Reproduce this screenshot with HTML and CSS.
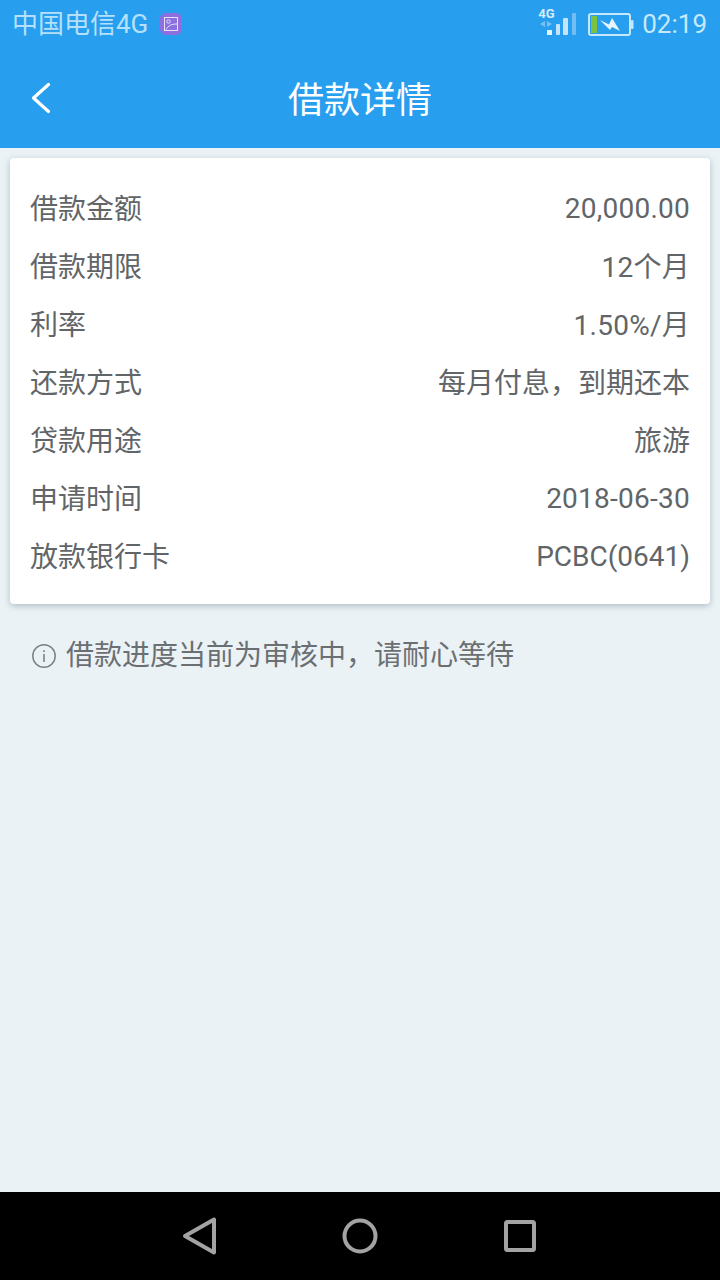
FILE: index.html
```html
<!DOCTYPE html>
<html lang="zh-CN">
<head>
<meta charset="utf-8">
<title>借款详情</title>
<link rel="stylesheet" href="styles.css">
</head>
<body>
<div class="screen">
  <header class="top">
    <div class="status">
      <div class="status-left">
        <span class="carrier">中国电信4G</span>
        <svg class="notif" width="24" height="24" viewBox="0 0 24 24">
          <rect x="1" y="1" width="22" height="22" rx="6" fill="#8e6fe0"/>
          <rect x="5.5" y="5.5" width="13" height="13" fill="none" stroke="#e6e2fa" stroke-width="1"/>
          <circle cx="9.5" cy="9.5" r="1.7" fill="none" stroke="#e6e2fa" stroke-width="1"/>
          <path d="M7 17.5C9.5 13.5 12.5 12 18 12" fill="none" stroke="#e6e2fa" stroke-width="1"/>
        </svg>
      </div>
      <div class="status-right">
        <div class="signal">
          <span class="net">4G</span>
          <svg class="bars" width="38" height="28" viewBox="0 0 38 28">
            <path d="M7 13v6l-5-3zM9 13l5 3-5 3z" fill="#7cc0f2"/>
            <rect x="9" y="22" width="5" height="5" fill="#e4f3fd"/>
            <rect x="18" y="16" width="4" height="11" rx="1" fill="#c5e4fa"/>
            <rect x="25" y="10" width="5" height="17" rx="1" fill="#c5e4fa"/>
            <rect x="34" y="5" width="4" height="22" rx="1" fill="#74bdf3"/>
          </svg>
        </div>
        <svg class="battery" width="46" height="23" viewBox="0 0 46 23">
          <rect x="1" y="1" width="41" height="21" rx="2" fill="none" stroke="#c5e8fb" stroke-width="2"/>
          <rect x="43" y="7" width="2.5" height="9" rx="1" fill="#c5e8fb"/>
          <rect x="3" y="3" width="6" height="17" fill="#7dc142"/>
          <path d="M12 7l9 4.500 3-6.500 8 13-8-4-2 3z" fill="#e6f5fd"/>
        </svg>
        <span class="clock">02:19</span>
      </div>
    </div>
    <div class="titlebar">
      <svg class="back" width="24" height="34" viewBox="0 0 24 34">
        <path d="M19.500 3.500L4.500 17l15 13.500" fill="none" stroke="#fff" stroke-width="3.200" stroke-linecap="round" stroke-linejoin="round"/>
      </svg>
      <h1 class="title">借款详情</h1>
    </div>
  </header>

  <main class="content">
    <section class="card">
      <div class="row"><span>借款金额</span><span class="num latin">20,000.00</span></div>
      <div class="row"><span>借款期限</span><span class="num">12个月</span></div>
      <div class="row"><span>利率</span><span class="num">1.50%/月</span></div>
      <div class="row"><span>还款方式</span><span>每月付息，到期还本</span></div>
      <div class="row"><span>贷款用途</span><span>旅游</span></div>
      <div class="row"><span>申请时间</span><span class="num latin">2018-06-30</span></div>
      <div class="row"><span>放款银行卡</span><span class="latin">PCBC(0641)</span></div>
    </section>
    <p class="notice">
      <svg class="info" width="26" height="26" viewBox="0 0 26 26">
        <circle cx="13" cy="13" r="11.200" fill="none" stroke="#7d8184" stroke-width="1.500"/>
        <rect x="12.200" y="11" width="1.600" height="8" fill="#7d8184"/>
        <rect x="12.200" y="7.200" width="1.600" height="1.800" fill="#7d8184"/>
      </svg>
      <span>借款进度当前为审核中，请耐心等待</span>
    </p>
  </main>

  <nav class="navbar">
    <svg width="36" height="40" viewBox="0 0 36 40">
      <path d="M32 3.500v33L3 20z" fill="none" stroke="#a3a3a3" stroke-width="4" stroke-linejoin="round"/>
    </svg>
    <svg width="36" height="36" viewBox="0 0 36 36">
      <circle cx="18" cy="18" r="15.500" fill="none" stroke="#a3a3a3" stroke-width="4"/>
    </svg>
    <svg width="36" height="32" viewBox="0 0 36 32">
      <rect x="4" y="2" width="28" height="28" rx="1.500" fill="none" stroke="#a3a3a3" stroke-width="4"/>
    </svg>
  </nav>
</div>
</body>
</html>
```
FILE: styles.css
```css
* { box-sizing: border-box; }
html, body { margin: 0; padding: 0; }
body { font-family: "Roboto", "Noto Sans CJK SC", sans-serif; }
.screen { width: 720px; height: 1280px; display: flex; flex-direction: column; background: #eaf2f6; }
.top { height: 148px; background: #279eee; flex: none; }
.status { height: 48px; display: flex; justify-content: space-between; align-items: center; padding: 0 13px 0 12px; }
.status-left { display: flex; align-items: center; gap: 11px; }
.carrier { font-size: 26px; color: #b5e0fb; line-height: 48px; }
.status-right { display: flex; align-items: center; }
.signal { position: relative; width: 38px; height: 28px; margin-right: 12px; margin-top: -4px; }
.bars { display: block; }
.net { position: absolute; left: 0; top: -1px; font-size: 13px; font-weight: 700; line-height: 14px; color: #d5ecfc; }
.battery { margin-right: 8px; }
.clock { font-size: 26px; color: #c5e8fb; line-height: 48px; }
.titlebar { height: 100px; padding-bottom: 2px; display: flex; align-items: center; justify-content: center; position: relative; }
.back { position: absolute; left: 29px; top: 33px; }
.title { margin: 0; font-size: 36px; font-weight: 400; color: #fff; }
.content { flex: 1; padding: 10px 10px 0; }
.card { height: 446px; background: #fff; border-radius: 4px; box-shadow: 0 2px 6px rgba(70,90,100,.35); padding: 20px 20px 0; }
.row { height: 58px; display: flex; justify-content: space-between; align-items: center; font-size: 28px; color: #616568; }
.num { letter-spacing: 0.25px; }
.latin { padding-top: 2px; }
.notice { margin: 29px 0 0; padding-left: 21px; display: flex; align-items: center; gap: 9px; font-size: 28px; line-height: 46px; color: #6b6f72; }
.info { flex: none; }
.navbar { height: 88px; flex: none; background: #000; display: flex; align-items: center; padding-left: 182px; gap: 124px; }
```
